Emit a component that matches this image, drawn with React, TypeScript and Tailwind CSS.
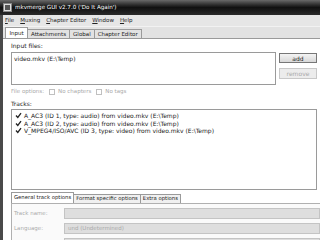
import React from 'react'

const font = { fontFamily: '"DejaVu Sans", "Liberation Sans", sans-serif' }

function Check() {
  return (
    <svg width="7" height="7" viewBox="0 0 7 7" className="shrink-0">
      <path d="M1 3.5 L2.8 5.5 L6 1.2" stroke="#222" strokeWidth="1.3" fill="none" />
    </svg>
  )
}

const tracks = [
  'A_AC3 (ID 1, type: audio) from video.mkv (E:\\Temp)',
  'A_AC3 (ID 2, type: audio) from video.mkv (E:\\Temp)',
  'V_MPEG4/ISO/AVC (ID 3, type: video) from video.mkv (E:\\Temp)',
]

export default function App() {
  return (
    <div className="w-[320px] h-[240px] overflow-hidden flex flex-col bg-white text-[6px] text-[#222]" style={font}>
      {/* title bar */}
      <div className="h-[15px] shrink-0 flex items-center bg-gradient-to-b from-[#6a6a6a] via-[#111] to-[#2a2a2a] pl-[3px]">
        <div className="w-[9px] h-[9px] bg-[#ddd] border border-[#888] flex items-center justify-center">
          <div className="w-[5px] h-[5px] bg-[#555]" />
        </div>
        <span className="ml-[3px] text-white text-[5.6px]">mkvmerge GUI v2.7.0 ('Do It Again')</span>
      </div>

      <div className="flex flex-1 min-h-0">
        <div className="w-[3px] shrink-0 bg-[#4a4a4a]" />
        <div className="flex-1 flex flex-col min-w-0">
          {/* menu bar */}
          <div className="h-[12px] shrink-0 flex items-center gap-[6px] pl-[2px] bg-[#e6e6e6] border-b border-[#f2f2f2] text-[5.5px]">
            <span><u>F</u>ile</span>
            <span><u>M</u>uxing</span>
            <span><u>C</u>hapter Editor</span>
            <span><u>W</u>indow</span>
            <span><u>H</u>elp</span>
          </div>

          {/* tabs */}
          <div className="h-[11px] shrink-0 flex items-end pl-[2px] bg-[#e2e2e2] text-[5.5px]">
            <div className="h-[11px] w-[23px] flex items-center justify-center bg-white border border-b-0 border-[#9a9a9a]">Input</div>
            <div className="h-[9px] px-[3px] flex items-center border-t border-r border-[#9a9a9a]">Attachments</div>
            <div className="h-[9px] px-[3px] flex items-center border-t border-r border-[#9a9a9a]">Global</div>
            <div className="h-[9px] px-[3px] flex items-center border-t border-r border-[#9a9a9a]">Chapter Editor</div>
          </div>

          {/* input page */}
          <div className="flex-1 flex flex-col bg-white border-t border-[#9a9a9a] pl-[8px] min-h-0">
            <div className="h-[13px] shrink-0 flex items-center">Input files:</div>
            <div className="flex shrink-0">
              <div className="w-[265px] h-[33px] border border-[#9a9a9a] px-[2px] py-[1px]">video.mkv (E:\Temp)</div>
              <div className="ml-[3px] flex flex-col gap-[5px] pt-[1px]">
                <div className="w-[38px] h-[10px] flex items-center justify-center border border-[#777] bg-gradient-to-b from-[#f4f4f4] to-[#d8d8d8]">add</div>
                <div className="w-[38px] h-[11px] flex items-center justify-center border border-[#c8c8c8] bg-[#ececec] text-[#aaa]">remove</div>
              </div>
            </div>
            <div className="h-[13px] shrink-0 flex items-center gap-[3px] text-[#aaa] text-[5.5px]">
              <span>File options:</span>
              <span className="w-[6px] h-[6px] border border-[#c0c0c0] ml-[2px]" />
              <span>No chapters</span>
              <span className="w-[6px] h-[6px] border border-[#c0c0c0] ml-[2px]" />
              <span>No tags</span>
            </div>
            <div className="h-[10px] shrink-0 flex items-center">Tracks:</div>
            <div className="w-[306px] h-[81px] shrink-0 mt-[1px] border border-[#9a9a9a] pt-[2px] pl-[3px] flex flex-col">
              {tracks.map(t => (
                <div key={t} className="h-[7.5px] flex items-center gap-[2px] whitespace-nowrap">
                  <Check />
                  <span>{t}</span>
                </div>
              ))}
            </div>

            {/* lower tabs */}
            <div className="mt-[2px] h-[11px] shrink-0 flex items-end text-[5.3px] whitespace-nowrap">
              <div className="h-[11px] px-[2px] flex items-center bg-white border border-b-0 border-[#9a9a9a]">General track options</div>
              <div className="h-[9px] px-[2px] flex items-center border-t border-r border-[#9a9a9a] bg-[#f0f0f0]">Format specific options</div>
              <div className="h-[9px] px-[2px] flex items-center border-t border-r border-[#9a9a9a] bg-[#f0f0f0]">Extra options</div>
            </div>
            <div className="flex-1 border-t border-l border-[#b0b0b0] bg-[#fafafa] flex flex-col gap-[4px] pt-[4px] text-[#aaa] text-[5.5px] whitespace-nowrap">
              <div className="flex items-center">
                <span className="w-[52px] pl-[2px]">Track name:</span>
                <div className="flex-1 h-[11px] bg-[#dedede] border border-[#c4c4c4]" />
              </div>
              <div className="flex items-center">
                <span className="w-[52px] pl-[2px]">Language:</span>
                <div className="flex-1 h-[11px] bg-[#dedede] border border-[#c4c4c4] flex items-center px-[3px]">und (Undetermined)</div>
              </div>
              <div className="flex items-center">
                <span className="w-[52px] pl-[2px]">Default track flag:</span>
                <div className="flex-1 h-[11px] bg-[#dedede] border border-[#c4c4c4] flex items-center px-[3px]">default</div>
              </div>
            </div>
          </div>
        </div>
      </div>
    </div>
  )
}
